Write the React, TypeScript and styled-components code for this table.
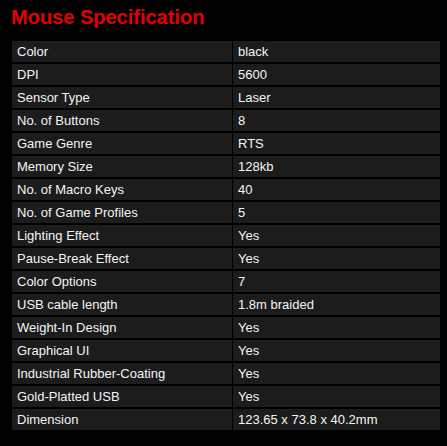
import React from "react";
import styled, { createGlobalStyle } from "styled-components";

interface Spec {
  label: string;
  value: string;
}

const specs: Spec[] = [
  { label: "Color", value: "black" },
  { label: "DPI", value: "5600" },
  { label: "Sensor Type", value: "Laser" },
  { label: "No. of Buttons", value: "8" },
  { label: "Game Genre", value: "RTS" },
  { label: "Memory Size", value: "128kb" },
  { label: "No. of Macro Keys", value: "40" },
  { label: "No. of Game Profiles", value: "5" },
  { label: "Lighting Effect", value: "Yes" },
  { label: "Pause-Break Effect", value: "Yes" },
  { label: "Color Options", value: "7" },
  { label: "USB cable length", value: "1.8m braided" },
  { label: "Weight-In Design", value: "Yes" },
  { label: "Graphical UI", value: "Yes" },
  { label: "Industrial Rubber-Coating", value: "Yes" },
  { label: "Gold-Platted USB", value: "Yes" },
  { label: "Dimension", value: "123.65 x 73.8 x 40.2mm" },
];

const GlobalStyle = createGlobalStyle`
  html, body {
    margin: 0;
    padding: 0;
    background: #000;
  }
`;

const App: React.FC = () => (
  <>
    <GlobalStyle />
    <Page>
      <Title>Mouse Specification</Title>
      <SpecGrid>
        {specs.map((spec) => (
          <React.Fragment key={spec.label}>
            <Cell>{spec.label}</Cell>
            <Cell>{spec.value}</Cell>
          </React.Fragment>
        ))}
      </SpecGrid>
    </Page>
  </>
);

const Page = styled.div`
  width: 447px;
  height: 446px;
  box-sizing: border-box;
  padding: 5px 7px 0 12px;
  background: #000;
  font-family: "Liberation Sans", Arial, sans-serif;
`;

const Title = styled.h2`
  margin: 0 0 12px -1px;
  font-size: 20px;
  line-height: 24px;
  font-weight: 700;
  color: #e30000;
`;

const SpecGrid = styled.div`
  display: grid;
  grid-template-columns: 220px 207px;
  column-gap: 1px;
  row-gap: 2px;
  width: 428px;
`;

const Cell = styled.div`
  height: 21px;
  line-height: 21px;
  padding: 0 5px;
  background: #1c1c1c;
  color: #f4f4f4;
  font-size: 13px;
  white-space: nowrap;
`;

export default App;
